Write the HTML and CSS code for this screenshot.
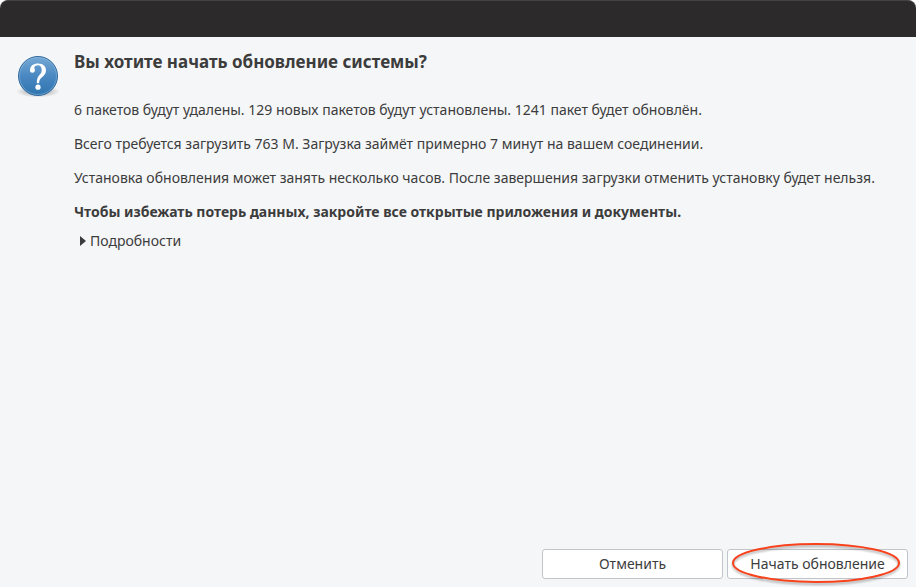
FILE: index.html
```
<!DOCTYPE html>
<html lang="ru">
<head>
  <meta charset="utf-8">
  <title>Обновление системы</title>
  <link rel="stylesheet" href="styles.css">
</head>
<body>
  <header class="titlebar"></header>
  <main class="dialog">
    <svg class="icon" viewBox="0 0 44 44" aria-hidden="true">
      <defs>
        <linearGradient id="ball" x1="0" y1="0" x2="0" y2="1">
          <stop offset="0" stop-color="#76a9d5"/>
          <stop offset="0.5" stop-color="#4a88c2"/>
          <stop offset="1" stop-color="#2e74ae"/>
        </linearGradient>
        <radialGradient id="shade">
          <stop offset="0.6" stop-color="#000" stop-opacity="0.16"/>
          <stop offset="1" stop-color="#000" stop-opacity="0"/>
        </radialGradient>
      </defs>
      <ellipse cx="22" cy="37.5" rx="22" ry="6" fill="url(#shade)"/>
      <circle cx="22" cy="22" r="19.5" fill="url(#ball)" stroke="#32699d"/>
      <circle cx="22" cy="22" r="18.5" fill="none" stroke="#8fbbe0" stroke-opacity="0.5"/>
      <path d="M14 16.7C14 12 17.3 9.6 22.2 9.6C27 9.6 30 12.4 30 16.2C30 19.4 28.4 21.2 26 23.3C23.8 25.2 23.2 26.5 23.2 29.2H20.8C20.7 25.2 21.6 23.3 23.2 21.3C24.7 19.4 25.7 18.3 25.7 15.9C25.7 13.1 24.3 11.3 21.8 11.3C19.7 11.3 18.3 12.3 18.3 13.6C18.3 14.5 18.9 15 18.9 16.3C18.9 17.7 17.9 18.7 16.5 18.7C15 18.7 14 17.9 14 16.7Z" fill="#fff"/>
      <circle cx="22" cy="33.2" r="2.6" fill="#fff"/>
    </svg>
    <section class="content">
      <h1>Вы хотите начать обновление системы?</h1>
      <p>6 пакетов будут удалены. 129 новых пакетов будут установлены. 1241 пакет будет обновлён.</p>
      <p>Всего требуется загрузить 763 M. Загрузка займёт примерно 7 минут на вашем соединении.</p>
      <p>Установка обновления может занять несколько часов. После завершения загрузки отменить установку будет нельзя.</p>
      <p class="warning">Чтобы избежать потерь данных, закройте все открытые приложения и документы.</p>
      <button class="expander" type="button" aria-expanded="false">
        <svg class="arrow" viewBox="0 0 6 10" aria-hidden="true"><path d="M0 0L6 5L0 10Z"/></svg>
        Подробности
      </button>
    </section>
  </main>
  <footer class="actions">
    <button class="btn" type="button">Отменить</button>
    <button class="btn btn-start" type="button">
      Начать обновление
      <svg class="mark" viewBox="0 0 172 42" aria-hidden="true"><ellipse cx="86" cy="20" rx="83" ry="19"/></svg>
    </button>
  </footer>
</body>
</html>
```
FILE: styles.css
```
* {
  box-sizing: border-box;
}
html {
  background-color: #fff;
}
body {
  display: flex;
  flex-direction: column;
  min-height: 100vh;
  margin: 0;
  font-family: "Noto Sans", sans-serif;
  font-size: 14px;
  line-height: 18px;
  color: #3c3c3c;
}
.titlebar {
  height: 37px;
  background-color: #2c2a2b;
  border-top: 1px solid #444243;
  border-radius: 8px 8px 0 0;
}
.dialog {
  display: flex;
  flex: 1;
  gap: 14px;
  padding: 14px 8px 8px 16px;
  background-color: #f5f6f8;
}
.icon {
  flex: none;
  width: 44px;
  height: 44px;
  margin-top: 3px;
}
.content {
  flex: 1;
}
h1 {
  margin: 0 0 28px;
  font-size: 17px;
  line-height: 22px;
}
p {
  margin: 0 0 16px;
}
.warning {
  margin-bottom: 11px;
  font-weight: bold;
}
button {
  font: inherit;
  color: inherit;
}
.expander {
  display: flex;
  align-items: center;
  gap: 4px;
  padding: 0 6px;
  background: none;
  border: 0;
}
.arrow {
  width: 6px;
  height: 10px;
  fill: #3c3c3c;
}
.actions {
  display: flex;
  justify-content: flex-end;
  gap: 4px;
  padding: 0 8px 8px;
  background-color: #f5f6f8;
}
.btn {
  width: 181px;
  height: 30px;
  padding: 0;
  background-color: #fff;
  border: 1px solid #c0c5cc;
  border-radius: 3px;
}
.btn-start {
  position: relative;
}
/* red outline around the main action */
.mark {
  position: absolute;
  top: -7px;
  left: 2px;
  width: 172px;
  height: 42px;
  overflow: visible;
  fill: none;
  stroke: #f8421c;
  stroke-width: 2;
  filter: drop-shadow(0 2px 1px rgba(0, 0, 0, 0.3));
}
```
